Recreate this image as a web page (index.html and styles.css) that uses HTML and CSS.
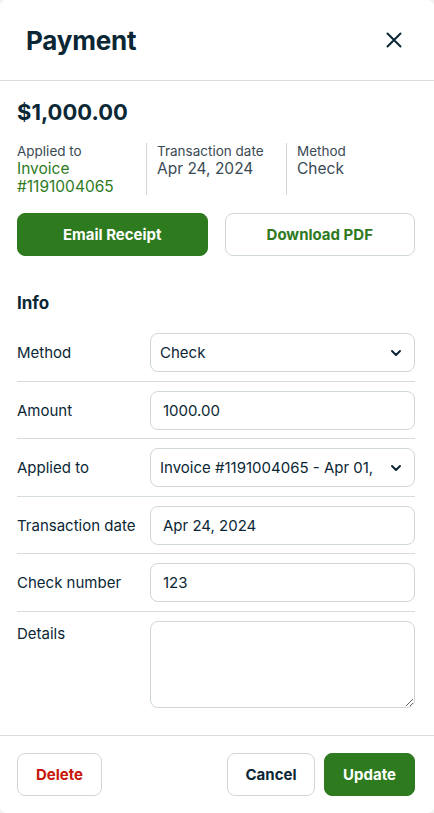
FILE: index.html
```html
<!DOCTYPE html>
<html lang="en">
<head>
    <meta charset="UTF-8">
    <meta name="viewport" content="width=device-width, initial-scale=1.0">
    <title>Payment</title>
    <link rel="stylesheet" href="styles.css">
</head>
<body>
    <div class="modal">
        <div class="modal-header">
            <h2>Payment</h2>
            <button class="close" aria-label="Close">
                <svg width="16" height="16" viewBox="0 0 16 16"><path d="M1.5 1.5L14.5 14.5M14.5 1.5L1.5 14.5" stroke="#0b2735" stroke-width="2" stroke-linecap="round"/></svg>
            </button>
        </div>
        <div class="modal-body">
            <div class="amount">$1,000.00</div>
            <div class="summary">
                <div class="summary-col">
                    <div class="summary-label">Applied to</div>
                    <a class="summary-link" href="#">Invoice<br>#1191004065</a>
                </div>
                <div class="summary-col">
                    <div class="summary-label">Transaction date</div>
                    <div class="summary-value">Apr 24, 2024</div>
                </div>
                <div class="summary-col">
                    <div class="summary-label">Method</div>
                    <div class="summary-value">Check</div>
                </div>
            </div>
            <div class="actions">
                <button class="btn btn-primary">Email Receipt</button>
                <button class="btn btn-outline-green">Download PDF</button>
            </div>

            <h3>Info</h3>
            <div class="form-row first">
                <label>Method</label>
                <div class="select-wrap">
                    <select>
                        <option>Check</option>
                    </select>
                    <svg class="chevron" width="12" height="8" viewBox="0 0 12 8"><path d="M2 2L6 6L10 2" fill="none" stroke="#0b2735" stroke-width="2" stroke-linecap="round" stroke-linejoin="round"/></svg>
                </div>
            </div>
            <div class="form-row">
                <label>Amount</label>
                <input type="text" value="1000.00">
            </div>
            <div class="form-row">
                <label>Applied to</label>
                <div class="select-wrap">
                    <select>
                        <option>Invoice #1191004065 - Apr 01, 2024</option>
                    </select>
                    <svg class="chevron" width="12" height="8" viewBox="0 0 12 8"><path d="M2 2L6 6L10 2" fill="none" stroke="#0b2735" stroke-width="2" stroke-linecap="round" stroke-linejoin="round"/></svg>
                </div>
            </div>
            <div class="form-row">
                <label>Transaction date</label>
                <input type="text" value="Apr 24, 2024">
            </div>
            <div class="form-row">
                <label>Check number</label>
                <input type="text" value="123">
            </div>
            <div class="form-row last">
                <label>Details</label>
                <textarea></textarea>
            </div>
        </div>
        <div class="modal-footer">
            <button class="btn btn-delete">Delete</button>
            <div class="footer-right">
                <button class="btn btn-cancel">Cancel</button>
                <button class="btn btn-primary btn-update">Update</button>
            </div>
        </div>
    </div>
</body>
</html>
```

FILE: styles.css
```css
* {
    box-sizing: border-box;
}
body {
    margin: 0;
    background-color: #f0f2f2;
    font-family: Inter, "Noto Sans", sans-serif;
    color: #0b2735;
}
.modal {
    width: 434px;
    height: 813px;
    background-color: #fff;
    border-radius: 6px;
    overflow: hidden;
}
.modal-header {
    height: 81px;
    display: flex;
    align-items: center;
    justify-content: space-between;
    padding: 0 32px 0 26px;
    border-bottom: 1px solid #d8dddd;
}
.modal-header h2 {
    margin: 0;
    font-size: 26px;
    font-weight: 700;
    letter-spacing: -0.2px;
}
.close {
    border: none;
    background: none;
    padding: 0;
    width: 16px;
    height: 16px;
    display: flex;
}
.modal-body {
    padding: 17px 19px 27px 17px;
    border-bottom: 1px solid #d8dddd;
}
.amount {
    font-size: 22px;
    font-weight: 700;
    line-height: 28px;
}
.summary {
    display: flex;
    margin-top: 17px;
}
.summary-col {
    flex-shrink: 0;
    width: 140px;
    padding: 0 0 17px 10px;
    border-left: 1px solid #d0d7d8;
}
.summary-col:first-child {
    width: 129px;
    padding: 0;
    border-left: none;
}
.summary-col:last-child {
    flex: 1;
}
.summary-label {
    font-size: 13.5px;
    line-height: 17px;
    color: #3a4a54;
}
.summary-value,
.summary-link {
    font-size: 15.5px;
    line-height: 17.5px;
    color: #3a4a54;
}
.summary-link {
    color: #2e7a1e;
    text-decoration: none;
    display: block;
}
.actions {
    display: flex;
    gap: 17px;
    margin-top: 18px;
}
.btn {
    height: 43px;
    border-radius: 8px;
    font-family: Inter, "Noto Sans", sans-serif;
    font-size: 15px;
    font-weight: 700;
    cursor: pointer;
}
.actions .btn {
    flex: 1;
}
.btn-primary {
    background-color: #2e7a1e;
    border: 1px solid #2e7a1e;
    color: #fff;
}
.btn-outline-green {
    background-color: #fff;
    border: 1px solid #d0d7d8;
    color: #2e7a1e;
}
h3 {
    margin: 36px 0 19px;
    font-size: 17px;
    font-weight: 700;
    line-height: 22px;
}
.form-row {
    display: flex;
    align-items: center;
    padding: 9px 0 8.5px;
    border-bottom: 1px solid #d5dcdc;
}
.form-row.first {
    padding-top: 0;
}
.form-row label {
    width: 133px;
    flex-shrink: 0;
    font-size: 15px;
    color: #0b2735;
}
.form-row.last {
    align-items: flex-start;
    border-bottom: none;
    padding-bottom: 0;
}
.form-row.last label {
    padding-top: 3px;
}
input[type="text"],
select,
textarea {
    width: 100%;
    height: 39px;
    border: 1px solid #d0d7d8;
    border-radius: 8px;
    font-family: Inter, "Noto Sans", sans-serif;
    font-size: 15px;
    color: #0b2735;
    background-color: #fff;
    padding: 0 12px;
}
.select-wrap {
    position: relative;
    width: 100%;
}
select {
    appearance: none;
    padding: 0 40px 0 9px;
}
.chevron {
    position: absolute;
    right: 13px;
    top: 16px;
    pointer-events: none;
}
textarea {
    display: block;
    height: 87px;
    padding: 8px 12px;
}
.modal-footer {
    display: flex;
    justify-content: space-between;
    padding: 17px 19px 0 17px;
}
.footer-right {
    display: flex;
    gap: 9px;
}
.btn-delete {
    width: 85px;
    background-color: #fff;
    border: 1px solid #d0d7d8;
    color: #c8170d;
}
.btn-cancel {
    width: 88px;
    background-color: #fff;
    border: 1px solid #d0d7d8;
    color: #0b2735;
}
.btn-update {
    width: 91px;
}
```
